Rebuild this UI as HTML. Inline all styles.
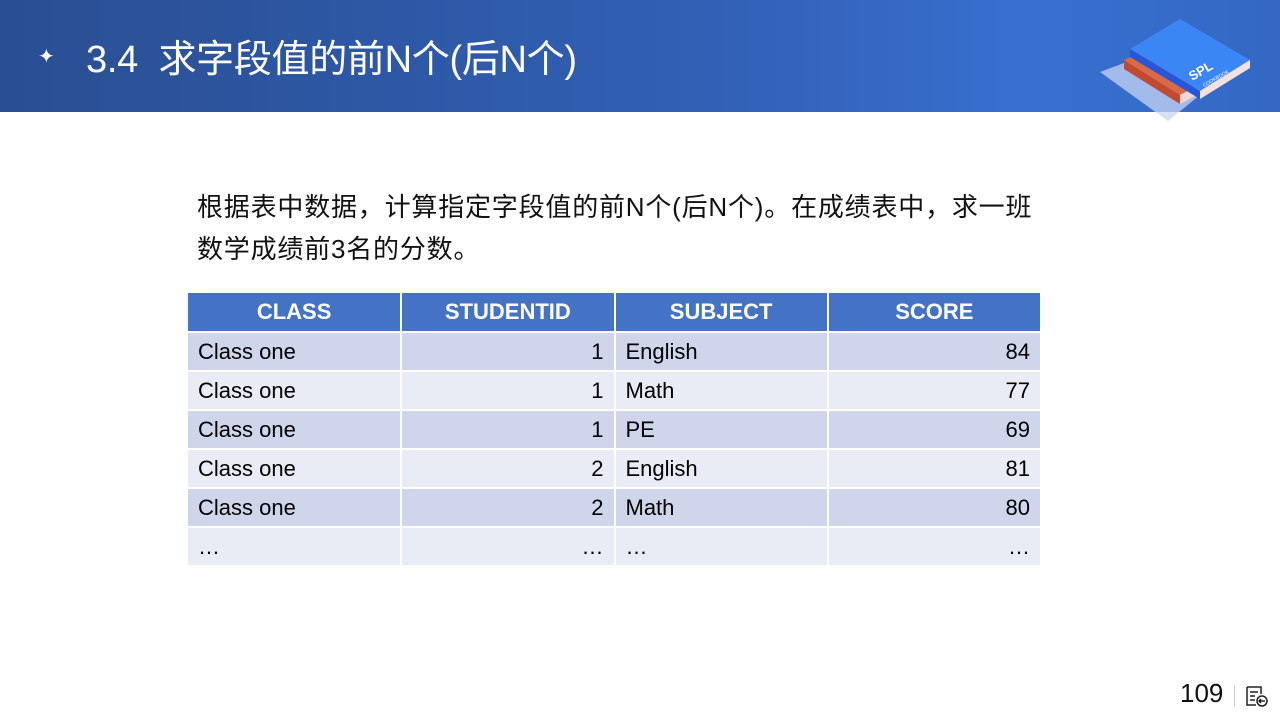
<!DOCTYPE html>
<html><head><meta charset="utf-8"><style>
body{margin:0;width:1280px;height:720px;overflow:hidden;background:#fff;font-family:"Liberation Sans","Noto Sans CJK SC",sans-serif;position:relative}
.hdr{position:absolute;left:0;top:0;width:1280px;height:112px;background:linear-gradient(90deg,#2a4e92 0%,#3160b5 55%,#386fcf 80%,#3468c4 100%)}
.title{position:absolute;left:86px;top:28px;color:#fff;font-size:38px;letter-spacing:-0.3px;white-space:nowrap}
.star{position:absolute;left:38px;top:44px;color:#fff;font-size:20px}
.p{position:absolute;left:197px;top:186px;font-size:26px;line-height:42px;color:#111;width:860px;letter-spacing:0.8px}
table{position:absolute;left:188px;top:293px;border-collapse:collapse;font-size:22px;table-layout:fixed;width:854px}
td,th{width:213px;height:39px;padding:0 10px;box-sizing:border-box;border:solid #fff;border-width:0 2px 2px 0}
th{background:#4472c4;color:#fff;font-size:22px}
tr.a td{background:#cfd5ea}tr.b td{background:#e9ebf5}
.r{text-align:right}
.pg{position:absolute;left:1180px;top:678px;font-size:26px;color:#111}
</style></head><body>
<div class="hdr"></div>
<div class="star">✦</div>
<div class="title">3.4&nbsp; 求字段值的前N个(后N个)</div>
<svg style="position:absolute;left:1100px;top:15px" width="160" height="110" viewBox="0 0 160 110">
<polygon points="0,57 40,42 100,80 68,106" fill="#c8d6f4" opacity="0.75"/>
<polygon points="24,45 70,25 128,55 80,80" fill="#d86a48"/>
<polygon points="24,45 80,80 80,89 24,54" fill="#c24a30"/>
<polygon points="80,80 128,55 128,64 80,89" fill="#f2d7d0"/>
<polygon points="30,34 80,4 150,45 100,76" fill="#3b86f5"/>
<polygon points="30,34 100,76 100,84 30,42" fill="#2757d8"/>
<polygon points="100,76 150,45 150,53 100,84" fill="#f5e0e0"/>
<text x="92" y="66" fill="#fff" font-size="13" font-weight="bold" transform="rotate(-30 92 66)">SPL</text>
<text x="104" y="72" fill="#fff" font-size="5" transform="rotate(-30 104 72)">COOKBOOK</text>
</svg>
<div class="p">根据表中数据，计算指定字段值的前N个(后N个)。在成绩表中，求一班<br>数学成绩前3名的分数。</div>
<table>
<tr><th>CLASS</th><th>STUDENTID</th><th>SUBJECT</th><th>SCORE</th></tr>
<tr class="a"><td>Class one</td><td class="r">1</td><td>English</td><td class="r">84</td></tr>
<tr class="b"><td>Class one</td><td class="r">1</td><td>Math</td><td class="r">77</td></tr>
<tr class="a"><td>Class one</td><td class="r">1</td><td>PE</td><td class="r">69</td></tr>
<tr class="b"><td>Class one</td><td class="r">2</td><td>English</td><td class="r">81</td></tr>
<tr class="a"><td>Class one</td><td class="r">2</td><td>Math</td><td class="r">80</td></tr>
<tr class="b"><td>…</td><td class="r">…</td><td>…</td><td class="r">…</td></tr>
</table>
<div class="pg">109</div>
<div style="position:absolute;left:1234px;top:685px;width:1px;height:22px;background:#c5d3ea"></div>
<svg style="position:absolute;left:1245px;top:684px" width="24" height="24" viewBox="0 0 24 24" fill="none" stroke="#222" stroke-width="1.5">
<path d="M2 3h14v7M2 3v18h9M5 8h8M5 12h5M5 16h5"/><circle cx="17" cy="17" r="5"/><path d="M20 17h-6M16 15l-2 2 2 2"/>
</svg>
</body></html>
